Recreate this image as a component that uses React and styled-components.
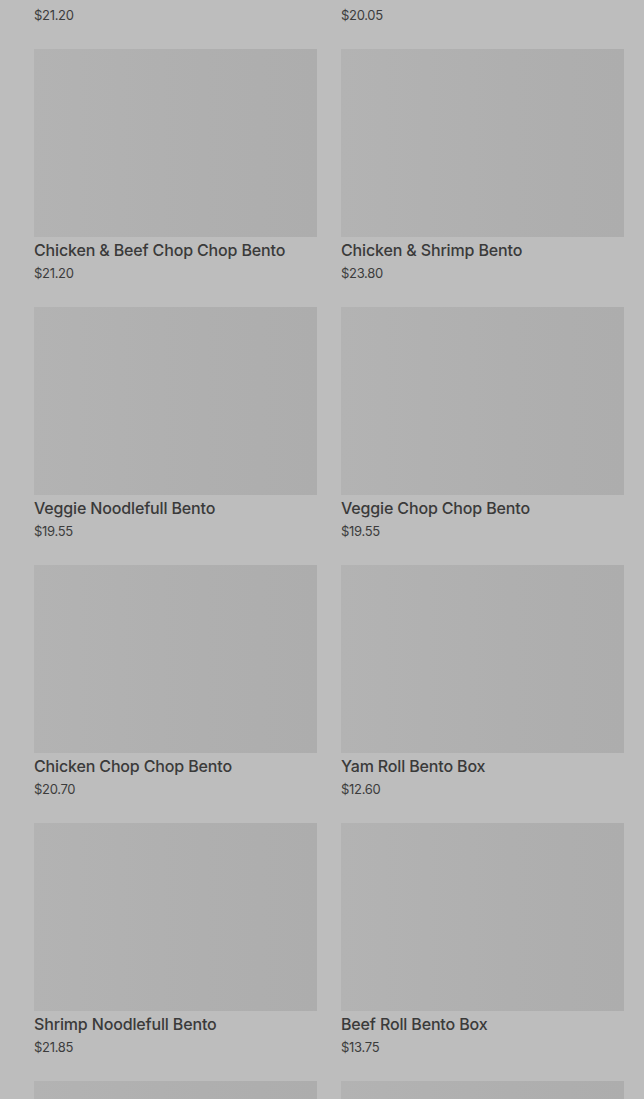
import React from "react";
import styled, { createGlobalStyle } from "styled-components";

const Global = createGlobalStyle`
  html, body { margin: 0; padding: 0; background: #bdbdbd; overflow: hidden; }
  body { font-family: Inter, "Noto Sans", sans-serif; }
`;

const Page = styled.div`
  width: 644px;
  height: 1099px;
  overflow: hidden;
  background: #bdbdbd;
`;

const Grid = styled.div`
  display: grid;
  grid-template-columns: 283px 283px;
  column-gap: 24px;
  row-gap: 24px;
  padding: 0 20px 0 34px;
  margin-top: -209px;
`;

const Card = styled.div`
  display: flex;
  flex-direction: column;
`;

const Thumb = styled.div`
  height: 188px;
  background: linear-gradient(90deg, #b3b3b3 0%, #afafaf 60%, #adadad 100%);
`;

const Title = styled.div`
  font-size: 16px;
  font-weight: 500;
  line-height: 26px;
  letter-spacing: -0.15px;
  color: #3a3a3a;
  white-space: nowrap;
`;

const Price = styled.div`
  font-size: 13px;
  font-weight: 400;
  line-height: 20px;
  letter-spacing: -0.3px;
  color: #3c3c3c;
`;

const items = [
  ["Chicken Noodlefull Bento", "$21.20"],
  ["Beef Noodlefull Bento", "$20.05"],
  ["Chicken & Beef Chop Chop Bento", "$21.20"],
  ["Chicken & Shrimp Bento", "$23.80"],
  ["Veggie Noodlefull Bento", "$19.55"],
  ["Veggie Chop Chop Bento", "$19.55"],
  ["Chicken Chop Chop Bento", "$20.70"],
  ["Yam Roll Bento Box", "$12.60"],
  ["Shrimp Noodlefull Bento", "$21.85"],
  ["Beef Roll Bento Box", "$13.75"],
  [null, null],
  [null, null],
];

export default function App() {
  return (
    <Page>
      <Global />
      <Grid>
        {items.map(([name, price], i) => (
          <Card key={i}>
            <Thumb />
            {name && <Title>{name}</Title>}
            {price && <Price>{price}</Price>}
          </Card>
        ))}
      </Grid>
    </Page>
  );
}
